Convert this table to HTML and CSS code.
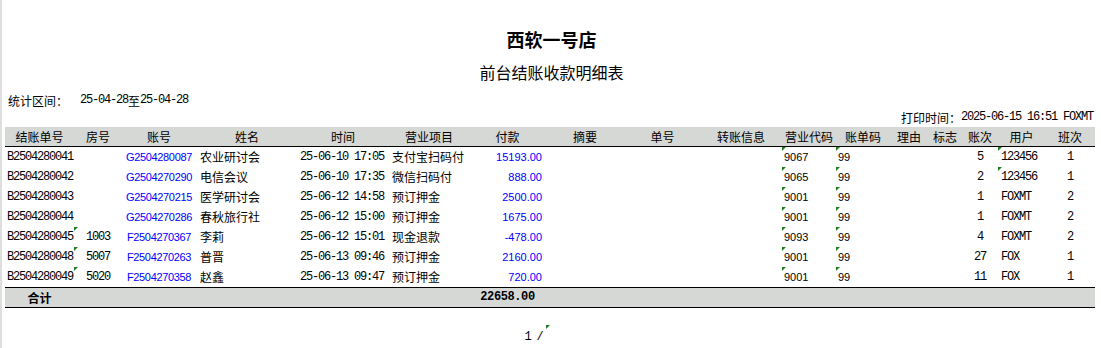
FILE: index.html
```html
<!DOCTYPE html>
<html lang="zh">
<head>
<meta charset="utf-8">
<title>前台结账收款明细表</title>
<link rel="stylesheet" href="styles.css">
</head>
<body>
<div class="page">
  <h1 class="title">西软一号店</h1>
  <h2 class="subtitle">前台结账收款明细表</h2>
  <div class="range"><span class="range-label">统计区间：</span><span class="mono">25-04-28</span><span>至</span><span class="mono">25-04-28</span></div>
  <div class="printed"><span>打印时间：</span><span class="mono">2025-06-15 16:51 FOXMT</span></div>
  <table class="report">
    <colgroup>
      <col style="width:69px"><col style="width:48px"><col style="width:74px"><col style="width:102px">
      <col style="width:90px"><col style="width:82px"><col style="width:75px"><col style="width:80px">
      <col style="width:75px"><col style="width:82px"><col style="width:54px"><col style="width:54px">
      <col style="width:38px"><col style="width:34px"><col style="width:36px"><col style="width:47px">
      <col style="width:50px">
    </colgroup>
    <thead>
      <tr>
        <th>结账单号</th><th>房号</th><th>账号</th><th>姓名</th><th>时间</th><th>营业项目</th><th>付款</th><th>摘要</th><th>单号</th><th>转账信息</th><th>营业代码</th><th>账单码</th><th>理由</th><th>标志</th><th>账次</th><th>用户</th><th>班次</th>
      </tr>
    </thead>
    <tbody>
      <tr>
        <td class="c-id mono">B2504280041</td><td class="c-room mono"></td><td class="c-acct">G2504280087</td><td class="c-name">农业研讨会</td><td class="c-time mono">25-06-10 17:05</td><td class="c-item">支付宝扫码付</td><td class="c-amt">15193.00</td><td></td><td></td><td></td><td class="c-code mk">9067</td><td class="c-code mk">99</td><td></td><td></td><td class="c-ctr mono">5</td><td class="c-user mono mk">123456</td><td class="c-ctr mono">1</td>
      </tr>
      <tr>
        <td class="c-id mono">B2504280042</td><td class="c-room mono"></td><td class="c-acct">G2504270290</td><td class="c-name">电信会议</td><td class="c-time mono">25-06-10 17:35</td><td class="c-item">微信扫码付</td><td class="c-amt">888.00</td><td></td><td></td><td></td><td class="c-code mk">9065</td><td class="c-code mk">99</td><td></td><td></td><td class="c-ctr mono">2</td><td class="c-user mono mk">123456</td><td class="c-ctr mono">1</td>
      </tr>
      <tr>
        <td class="c-id mono">B2504280043</td><td class="c-room mono"></td><td class="c-acct">G2504270215</td><td class="c-name">医学研讨会</td><td class="c-time mono">25-06-12 14:58</td><td class="c-item">预订押金</td><td class="c-amt">2500.00</td><td></td><td></td><td></td><td class="c-code mk">9001</td><td class="c-code mk">99</td><td></td><td></td><td class="c-ctr mono">1</td><td class="c-user mono">FOXMT</td><td class="c-ctr mono">2</td>
      </tr>
      <tr>
        <td class="c-id mono">B2504280044</td><td class="c-room mono"></td><td class="c-acct">G2504270286</td><td class="c-name">春秋旅行社</td><td class="c-time mono">25-06-12 15:00</td><td class="c-item">预订押金</td><td class="c-amt">1675.00</td><td></td><td></td><td></td><td class="c-code mk">9001</td><td class="c-code mk">99</td><td></td><td></td><td class="c-ctr mono">1</td><td class="c-user mono">FOXMT</td><td class="c-ctr mono">2</td>
      </tr>
      <tr>
        <td class="c-id mono">B2504280045</td><td class="c-room mono mk">1003</td><td class="c-acct">F2504270367</td><td class="c-name">李莉</td><td class="c-time mono">25-06-12 15:01</td><td class="c-item">现金退款</td><td class="c-amt">-478.00</td><td></td><td></td><td></td><td class="c-code mk">9093</td><td class="c-code mk">99</td><td></td><td></td><td class="c-ctr mono">4</td><td class="c-user mono">FOXMT</td><td class="c-ctr mono">2</td>
      </tr>
      <tr>
        <td class="c-id mono">B2504280048</td><td class="c-room mono mk">5007</td><td class="c-acct">F2504270263</td><td class="c-name">普晋</td><td class="c-time mono">25-06-13 09:46</td><td class="c-item">预订押金</td><td class="c-amt">2160.00</td><td></td><td></td><td></td><td class="c-code mk">9001</td><td class="c-code mk">99</td><td></td><td></td><td class="c-ctr mono">27</td><td class="c-user mono">FOX</td><td class="c-ctr mono">1</td>
      </tr>
      <tr>
        <td class="c-id mono">B2504280049</td><td class="c-room mono mk">5020</td><td class="c-acct">F2504270358</td><td class="c-name">赵鑫</td><td class="c-time mono">25-06-13 09:47</td><td class="c-item">预订押金</td><td class="c-amt">720.00</td><td></td><td></td><td></td><td class="c-code mk">9001</td><td class="c-code mk">99</td><td></td><td></td><td class="c-ctr mono">11</td><td class="c-user mono">FOX</td><td class="c-ctr mono">1</td>
      </tr>
    </tbody>
    <tfoot>
      <tr>
        <td class="t-label">合计</td><td></td><td></td><td></td><td></td><td></td><td class="t-sum mono">22658.00</td><td></td><td></td><td></td><td></td><td></td><td></td><td></td><td></td><td></td><td></td>
      </tr>
    </tfoot>
  </table>
  <div class="pager"><span class="mono">1 /</span><span class="pager-cell mk"></span></div>
</div>
</body>
</html>
```
FILE: styles.css
```css
html, body {
  margin: 0;
  padding: 0;
  background: #ffffff;
}

body {
  font-family: "Noto Sans CJK SC", "Noto Sans", sans-serif;
  font-size: 12px;
  color: #000000;
}

.page {
  border-left: 2px solid #dedede;
  height: 348px;
  box-sizing: border-box;
  padding: 27px 0 0 3px;
  overflow: hidden;
}

.mono {
  font-family: "Liberation Mono", "Noto Sans CJK SC", monospace;
  font-size: 12px;
  letter-spacing: -1.2px;
}

.title {
  margin: 0;
  height: 24px;
  text-align: center;
  font-size: 18px;
  font-weight: 700;
  line-height: 24px;
  padding-right: 3px;
}

.subtitle {
  margin: 11px 0 0;
  height: 21px;
  text-align: center;
  font-size: 16px;
  font-weight: 400;
  line-height: 21px;
  padding-right: 3px;
}

.range {
  margin-top: 9px;
  height: 16px;
  padding-left: 3px;
  display: flex;
  align-items: center;
}

.range-label {
  width: 72px;
}

.printed {
  margin-top: 1px;
  height: 16px;
  display: flex;
  align-items: center;
  justify-content: flex-end;
  padding-right: 8px;
}

.report {
  margin-top: 2px;
  border-collapse: collapse;
  border-spacing: 0;
  table-layout: fixed;
  width: 1090px;
}

.report th {
  background: #d6d8d6;
  font-weight: 400;
  height: 19px;
  line-height: 19px;
  padding: 0;
  text-align: center;
  white-space: nowrap;
  border-bottom: 1px solid #000000;
}

.report td {
  height: 20px;
  line-height: 20px;
  padding: 0;
  white-space: nowrap;
  overflow: hidden;
  vertical-align: middle;
}

.report td.c-id { padding-left: 2px; }
.report td.c-room { text-align: center; }
.report td.c-acct {
  text-align: center;
  color: #0000ff;
  font-family: "Liberation Sans", Arial, sans-serif;
  font-size: 11px;
  letter-spacing: -0.35px;
}
.report td.c-name { padding-left: 4px; }
.report td.c-time { padding-left: 2px; }
.report td.c-item { padding-left: 4px; }
.report td.c-amt {
  text-align: right;
  padding-right: 3px;
  color: #0000ff;
  font-family: "Liberation Sans", Arial, sans-serif;
  font-size: 11px;
}
.report td.c-code {
  padding-left: 2px;
  font-family: "Liberation Sans", Arial, sans-serif;
  font-size: 11px;
}
.report td.c-ctr { text-align: center; }
.report td.c-user { padding-left: 3px; }

.mk { position: relative; }
.mk::before {
  content: "";
  position: absolute;
  top: 0;
  left: 0;
  width: 0;
  height: 0;
  border-top: 4px solid #1f7f1f;
  border-right: 4px solid transparent;
}

.report tfoot td {
  background: #d6d8d6;
  border-top: 1px solid #000000;
  border-bottom: 1px solid #000000;
  height: 19px;
  line-height: 19px;
  font-weight: 700;
}

.report td.t-label { text-align: center; }
.report td.t-sum {
  text-align: center;
  font-weight: 700;
  letter-spacing: -0.4px;
}

.pager {
  margin-top: 21px;
  height: 16px;
  display: flex;
  justify-content: center;
  align-items: center;
  padding-right: 26px;
}

.pager-cell {
  display: inline-block;
  width: 10px;
  height: 16px;
  margin-left: 3px;
  margin-top: -8px;
}
```
